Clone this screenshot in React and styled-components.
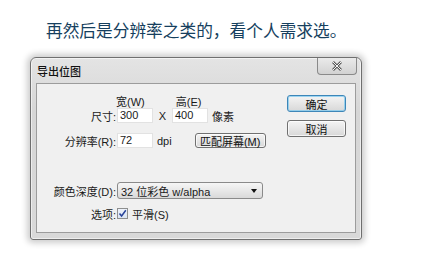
import React from "react";
import styled, { createGlobalStyle } from "styled-components";

const GlobalStyle = createGlobalStyle`
  html, body {
    margin: 0;
    padding: 0;
    background: #ffffff;
  }
  body {
    font-family: "Liberation Sans", "Noto Sans CJK SC", sans-serif;
  }
`;

const Page = styled.div`
  width: 446px;
  height: 270px;
  padding-top: 20px;
  box-sizing: border-box;
  overflow: hidden;
`;

const Heading = styled.h1`
  margin: 0 0 0 46px;
  font-family: "Noto Sans CJK SC", sans-serif;
  font-weight: 400;
  font-size: 16.7px;
  line-height: 20px;
  color: #163f5e;
  white-space: nowrap;
`;

const Frame = styled.div`
  margin: 17px 0 0 30px;
  width: 332px;
  height: 183px;
  box-sizing: border-box;
  border: 1px solid #6f6f6f;
  border-radius: 6px 6px 3px 3px;
  background: linear-gradient(#e4e4e4, #d6d6d6 30%, #d9d9d9);
  box-shadow: 0 0 6px 3px rgba(0, 0, 0, 0.2),
    inset 0 0 0 1px rgba(255, 255, 255, 0.55);
  padding: 0 5px 6px 5px;
  display: flex;
  flex-direction: column;
`;

const TitleBar = styled.div`
  height: 25px;
  display: flex;
  justify-content: space-between;
  align-items: flex-start;
`;

const Title = styled.span`
  font-size: 11px;
  line-height: 12px;
  margin: 8px 0 0 1px;
  color: #111;
  font-weight: 500;
`;

const CloseButton = styled.div`
  width: 40px;
  height: 17px;
  box-sizing: border-box;
  margin-right: -1px;
  border: 1px solid #8a8a8a;
  border-top: none;
  border-radius: 0 0 4px 4px;
  background: linear-gradient(#eaeaea, #d2d2d2);
  display: flex;
  align-items: center;
  justify-content: center;
`;

const Content = styled.div`
  flex: 1;
  box-sizing: border-box;
  border: 1px solid #9c9c9c;
  background: #f0f0f0;
  display: flex;
  color: #1a1a1a;
  font-size: 11px;
`;

const Form = styled.div`
  flex: 0 0 250px;
  display: flex;
  flex-direction: column;
`;

const Row = styled.div`
  display: flex;
  align-items: center;
  height: ${(p) => p.$h}px;
  margin-top: ${(p) => p.$mt}px;
  white-space: nowrap;
`;

const Label = styled.span`
  width: 79px;
  text-align: right;
  margin-right: 1px;
`;

const Caption = styled.span`
  margin-left: ${(p) => p.$ml}px;
`;

const Input = styled.div`
  width: 36px;
  height: 15px;
  box-sizing: border-box;
  background: #ffffff;
  border: 1px solid #e2e2e2;
  padding-left: 2px;
  line-height: 13px;
`;

const Sep = styled.span`
  width: 19px;
  text-align: center;
`;

const Unit = styled.span`
  margin-left: 4px;
`;

const Button = styled.div`
  box-sizing: border-box;
  width: ${(p) => p.$w}px;
  height: ${(p) => (p.$h ? p.$h : 17)}px;
  margin-left: ${(p) => p.$ml || 0}px;
  border: 1px solid ${(p) => (p.$primary ? "#3d86b8" : "#707070")};
  border-radius: 3px;
  background: linear-gradient(#f4f4f4, #e6e6e6 50%, #d8d8d8);
  box-shadow: inset 0 0 0 1px
    ${(p) => (p.$primary ? "rgba(120,200,240,0.7)" : "rgba(255,255,255,0.7)")};
  display: flex;
  align-items: center;
  justify-content: center;
  font-size: 11px;
  color: #111;
`;

const Select = styled.div`
  width: 146px;
  height: 17px;
  box-sizing: border-box;
  border: 1px solid #8a8a8a;
  border-radius: 3px;
  background: linear-gradient(#f6f6f6, #e8e8e8 50%, #d9d9d9);
  display: flex;
  align-items: center;
  justify-content: space-between;
  padding: 0 5px 0 3px;
`;

const Arrow = styled.span`
  width: 0;
  height: 0;
  border-left: 3px solid transparent;
  border-right: 3px solid transparent;
  border-top: 4px solid #111;
`;

const Check = styled.div`
  width: 11px;
  height: 11px;
  box-sizing: border-box;
  border: 1px solid #8e8f8f;
  background: linear-gradient(#eef3fb, #dbe5f3);
  display: flex;
  align-items: center;
  justify-content: center;
  margin-right: 4px;
`;

const Side = styled.div`
  display: flex;
  flex-direction: column;
  gap: 8px;
  padding-top: 11px;
`;

const App = () => (
  <Page>
    <GlobalStyle />
    <Heading>再然后是分辨率之类的，看个人需求选。</Heading>
    <Frame>
      <TitleBar>
        <Title>导出位图</Title>
        <CloseButton>
          <svg width="12" height="10" viewBox="0 0 12 10">
            <path d="M2 1 L10 9 M10 1 L2 9" stroke="#5a5a5a" strokeWidth="2.6" />
            <path d="M2 1 L10 9 M10 1 L2 9" stroke="#f4f4f4" strokeWidth="1" />
          </svg>
        </CloseButton>
      </TitleBar>
      <Content>
        <Form>
          <Row $h={14} $mt={10}>
            <Caption $ml={79}>宽(W)</Caption>
            <Caption $ml={31}>高(E)</Caption>
          </Row>
          <Row $h={15} $mt={0}>
            <Label>尺寸:</Label>
            <Input>300</Input>
            <Sep>X</Sep>
            <Input>400</Input>
            <Unit>像素</Unit>
          </Row>
          <Row $h={15} $mt={10}>
            <Label>分辨率(R):</Label>
            <Input>72</Input>
            <Unit>dpi</Unit>
            <Button $w={71} $h={15} $ml={23}>
              匹配屏幕(M)
            </Button>
          </Row>
          <Row $h={17} $mt={34}>
            <Label>颜色深度(D):</Label>
            <Select>
              <span>32 位彩色 w/alpha</span>
              <Arrow />
            </Select>
          </Row>
          <Row $h={13} $mt={8}>
            <Label>选项:</Label>
            <Check>
              <svg width="9" height="9" viewBox="0 0 9 9">
                <path
                  d="M1.5 4.5 L3.6 7 L7.8 1.3"
                  fill="none"
                  stroke="#27439a"
                  strokeWidth="1.5"
                />
              </svg>
            </Check>
            <span>平滑(S)</span>
          </Row>
        </Form>
        <Side>
          <Button $w={59} $primary>
            确定
          </Button>
          <Button $w={59}>取消</Button>
        </Side>
      </Content>
    </Frame>
  </Page>
);

export default App;
